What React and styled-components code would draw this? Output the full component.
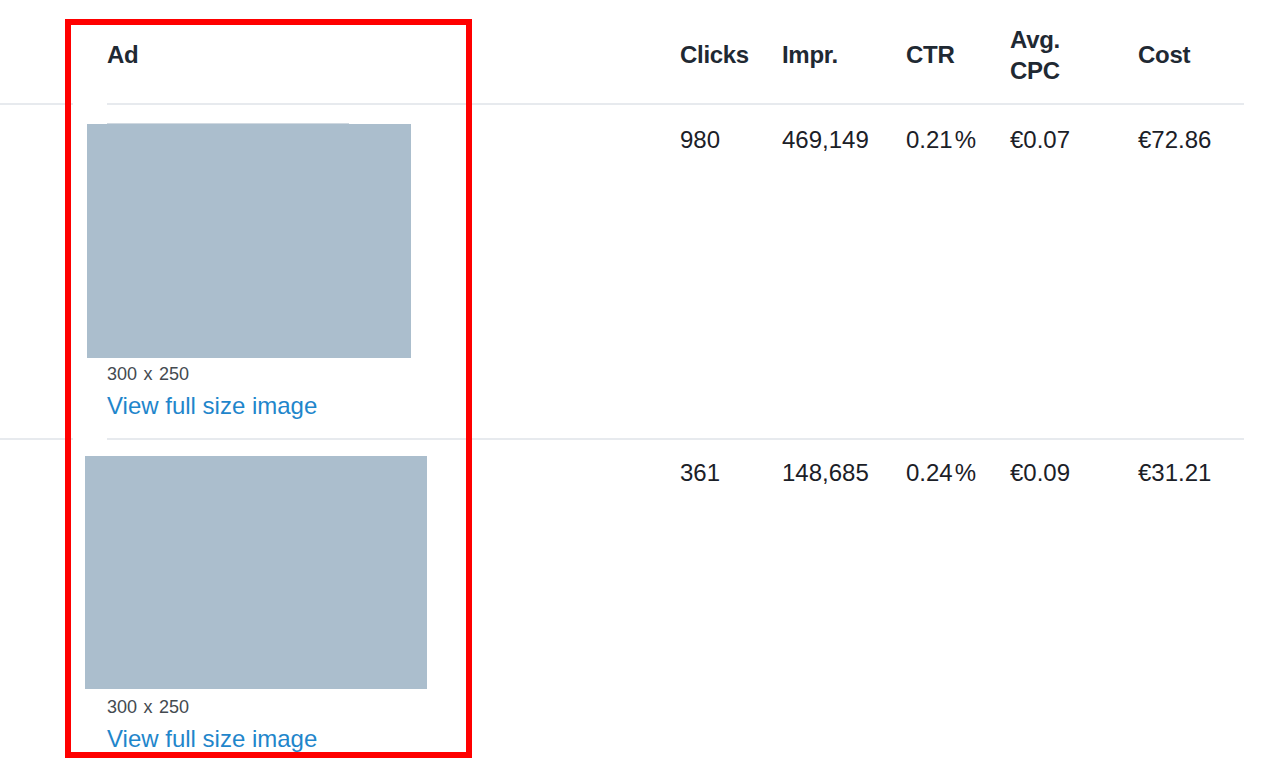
import React from "react";
import styled, { createGlobalStyle } from "styled-components";

const GlobalStyle = createGlobalStyle`
    html, body {
        margin: 0;
        padding: 0;
        background: #ffffff;
    }

    body {
        font-family: "Liberation Sans", Arial, sans-serif;
        color: #1d232b;
        overflow: hidden;
    }
`;

const COLUMNS = "73px 34px 573px 102px 124px 104px 128px 106px";

const rows = [
    {
        id: 1,
        image: { width: 324, height: 234, shift: -20, ghost: 242 },
        padTop: 18,
        padBottom: 17,
        labelGap: 5,
        dataTop: 19,
        clicks: "980",
        impr: "469,149",
        ctr: "0.21",
        cpc: "€0.07",
        cost: "€72.86",
        ruled: true,
    },
    {
        id: 2,
        image: { width: 342, height: 233, shift: -22, ghost: 0 },
        padTop: 15,
        padBottom: 16,
        labelGap: 7,
        dataTop: 17,
        clicks: "361",
        impr: "148,685",
        ctr: "0.24",
        cpc: "€0.09",
        cost: "€31.21",
        ruled: false,
    },
];

const Page = styled.div`
    position: relative;
    width: 1279px;
    height: 768px;
`;

const Table = styled.div`
    width: 1244px;
`;

const Row = styled.div`
    display: grid;
    grid-template-columns: ${COLUMNS};
`;

const Cell = styled.div`
    border-bottom: 2px solid ${props => props.ruled ? "#e7eaee" : "transparent"};
`;

const HeadCell = styled(Cell)`
    box-sizing: border-box;
    height: 105px;
    padding-top: 6px;
    display: flex;
    align-items: center;
    font-size: 24px;
    line-height: 31px;
    font-weight: bold;
    color: #1f2933;
    letter-spacing: -0.3px;
`;

const DataCell = styled(Cell)`
    padding-top: ${props => props.top}px;
    font-size: 24px;
    line-height: 31px;
    color: #1b2027;
`;

const AdCell = styled(Cell)`
    display: flex;
    flex-direction: column;
    align-items: flex-start;
    padding-top: ${props => props.padTop}px;
    padding-bottom: ${props => props.padBottom}px;
`;

const Ghost = styled.div`
    height: 1px;
    background: ${props => props.width ? "#cfd8e0" : "transparent"};
`;

const Preview = styled.div`
    background: #abbecd;
`;

const SizeLabel = styled.div`
    margin-top: ${props => props.gap}px;
    font-size: 18px;
    line-height: 23px;
    word-spacing: 1.5px;
    color: #444a50;
`;

const FullSizeLink = styled.a`
    margin-top: 4px;
    font-size: 24px;
    line-height: 31px;
    color: #1f86cb;
    text-decoration: none;
    cursor: pointer;
`;

const Percent = styled.span`
    margin-left: 2px;
`;

const Highlight = styled.div`
    position: absolute;
    left: 65px;
    top: 19px;
    width: 407px;
    height: 739px;
    box-sizing: border-box;
    border: 6px solid #ff0000;
    pointer-events: none;
`;

function AdRow({ row }) {
    const { image } = row;

    return <Row>
        <Cell ruled={row.ruled} />
        <div />
        <AdCell ruled={row.ruled} padTop={row.padTop} padBottom={row.padBottom}>
            <Ghost width={image.ghost} style={{ width: image.ghost }} />
            <Preview style={{ width: image.width, height: image.height, marginLeft: image.shift }} />
            <SizeLabel gap={row.labelGap}>300 x 250</SizeLabel>
            <FullSizeLink>View full size image</FullSizeLink>
        </AdCell>
        <DataCell ruled={row.ruled} top={row.dataTop}>{row.clicks}</DataCell>
        <DataCell ruled={row.ruled} top={row.dataTop}>{row.impr}</DataCell>
        <DataCell ruled={row.ruled} top={row.dataTop}>{row.ctr}<Percent>%</Percent></DataCell>
        <DataCell ruled={row.ruled} top={row.dataTop}>{row.cpc}</DataCell>
        <DataCell ruled={row.ruled} top={row.dataTop}>{row.cost}</DataCell>
    </Row>
}

export default function App() {
    return <Page>
        <GlobalStyle />
        <Table>
            <Row>
                <HeadCell ruled />
                <div />
                <HeadCell ruled>Ad</HeadCell>
                <HeadCell ruled>Clicks</HeadCell>
                <HeadCell ruled>Impr.</HeadCell>
                <HeadCell ruled>CTR</HeadCell>
                <HeadCell ruled>Avg.<br />CPC</HeadCell>
                <HeadCell ruled>Cost</HeadCell>
            </Row>
            {rows.map(row => <AdRow key={row.id} row={row} />)}
        </Table>
        <Highlight />
    </Page>
}
